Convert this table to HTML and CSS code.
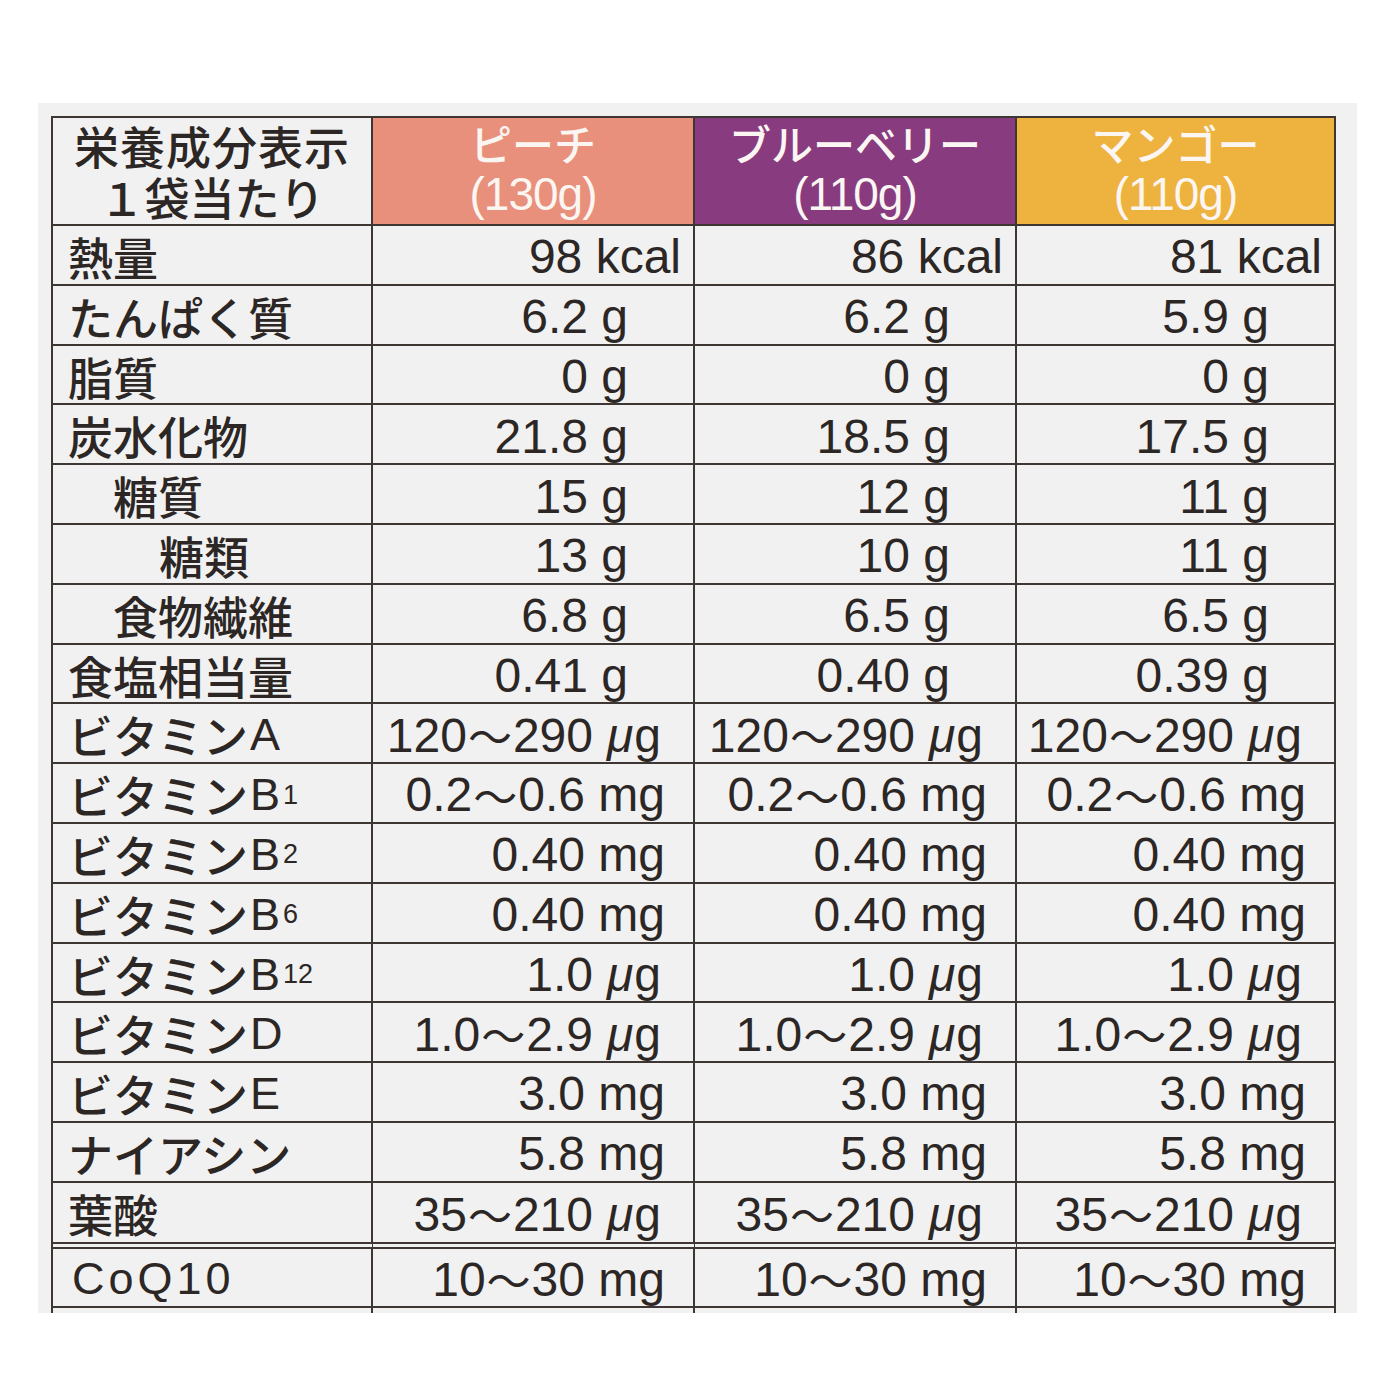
FILE: index.html
```html
<!DOCTYPE html>
<html lang="ja">
<head>
<meta charset="utf-8">
<title>栄養成分表示</title>
<link rel="stylesheet" href="styles.css">
</head>
<body>
<div class="panel">
  <div class="table">
    <div class="cell head-label"><span>栄養成分表示</span><span>１袋当たり</span></div>
    <div class="cell head peach"><span class="kana">ピーチ</span><span class="wt">(130g)</span></div>
    <div class="cell head berry"><span class="kana">ブルーベリー</span><span class="wt">(110g)</span></div>
    <div class="cell head mango"><span class="kana">マンゴー</span><span class="wt">(110g)</span></div>

    <div class="cell label">熱量</div>
    <div class="cell val kcal">98 kcal</div>
    <div class="cell val kcal">86 kcal</div>
    <div class="cell val kcal">81 kcal</div>

    <div class="cell label">たんぱく質</div>
    <div class="cell val g">6.2 g</div>
    <div class="cell val g">6.2 g</div>
    <div class="cell val g">5.9 g</div>

    <div class="cell label">脂質</div>
    <div class="cell val g">0 g</div>
    <div class="cell val g">0 g</div>
    <div class="cell val g">0 g</div>

    <div class="cell label">炭水化物</div>
    <div class="cell val g">21.8 g</div>
    <div class="cell val g">18.5 g</div>
    <div class="cell val g">17.5 g</div>

    <div class="cell label ind1">糖質</div>
    <div class="cell val g">15 g</div>
    <div class="cell val g">12 g</div>
    <div class="cell val g">11 g</div>

    <div class="cell label ind2">糖類</div>
    <div class="cell val g">13 g</div>
    <div class="cell val g">10 g</div>
    <div class="cell val g">11 g</div>

    <div class="cell label ind1">食物繊維</div>
    <div class="cell val g">6.8 g</div>
    <div class="cell val g">6.5 g</div>
    <div class="cell val g">6.5 g</div>

    <div class="cell label">食塩相当量</div>
    <div class="cell val g">0.41 g</div>
    <div class="cell val g">0.40 g</div>
    <div class="cell val g">0.39 g</div>

    <div class="cell label">ビタミン<span class="lat">A</span></div>
    <div class="cell val ug">120<span class="tl">～</span>290<i>μ</i>g</div>
    <div class="cell val ug">120<span class="tl">～</span>290<i>μ</i>g</div>
    <div class="cell val ug">120<span class="tl">～</span>290<i>μ</i>g</div>

    <div class="cell label">ビタミン<span class="lat">B</span><span class="sub">1</span></div>
    <div class="cell val mg">0.2<span class="tl">～</span>0.6 mg</div>
    <div class="cell val mg">0.2<span class="tl">～</span>0.6 mg</div>
    <div class="cell val mg">0.2<span class="tl">～</span>0.6 mg</div>

    <div class="cell label">ビタミン<span class="lat">B</span><span class="sub">2</span></div>
    <div class="cell val mg">0.40 mg</div>
    <div class="cell val mg">0.40 mg</div>
    <div class="cell val mg">0.40 mg</div>

    <div class="cell label">ビタミン<span class="lat">B</span><span class="sub">6</span></div>
    <div class="cell val mg">0.40 mg</div>
    <div class="cell val mg">0.40 mg</div>
    <div class="cell val mg">0.40 mg</div>

    <div class="cell label">ビタミン<span class="lat">B</span><span class="sub">12</span></div>
    <div class="cell val ug">1.0<i>μ</i>g</div>
    <div class="cell val ug">1.0<i>μ</i>g</div>
    <div class="cell val ug">1.0<i>μ</i>g</div>

    <div class="cell label">ビタミン<span class="lat">D</span></div>
    <div class="cell val ug">1.0<span class="tl">～</span>2.9<i>μ</i>g</div>
    <div class="cell val ug">1.0<span class="tl">～</span>2.9<i>μ</i>g</div>
    <div class="cell val ug">1.0<span class="tl">～</span>2.9<i>μ</i>g</div>

    <div class="cell label">ビタミン<span class="lat">E</span></div>
    <div class="cell val mg">3.0 mg</div>
    <div class="cell val mg">3.0 mg</div>
    <div class="cell val mg">3.0 mg</div>

    <div class="cell label">ナイアシン</div>
    <div class="cell val mg">5.8 mg</div>
    <div class="cell val mg">5.8 mg</div>
    <div class="cell val mg">5.8 mg</div>

    <div class="cell label dbl">葉酸</div>
    <div class="cell val ug dbl">35<span class="tl">～</span>210<i>μ</i>g</div>
    <div class="cell val ug dbl">35<span class="tl">～</span>210<i>μ</i>g</div>
    <div class="cell val ug dbl">35<span class="tl">～</span>210<i>μ</i>g</div>

    <div class="cell label"><span class="lat coq">CoQ10</span></div>
    <div class="cell val mg">10<span class="tl">～</span>30 mg</div>
    <div class="cell val mg">10<span class="tl">～</span>30 mg</div>
    <div class="cell val mg">10<span class="tl">～</span>30 mg</div>

    <div class="cell label"></div>
    <div class="cell val"></div>
    <div class="cell val"></div>
    <div class="cell val"></div>
  </div>
</div>
</body>
</html>
```

FILE: styles.css
```css
html, body {
  margin: 0;
  padding: 0;
  background: #ffffff;
}

body {
  font-family: "Noto Sans CJK JP", "Noto Sans", sans-serif;
  color: #2c2725;
}

.panel {
  margin: 103px 0 0 38px;
  width: 1319px;
  height: 1210px;
  background: #f1f1f1;
  padding: 13px 0 0 13px;
  box-sizing: border-box;
  overflow: hidden;
}

.table {
  display: grid;
  grid-template-columns: 320px 322px 322px 319px;
  grid-template-rows: 108px repeat(16, 59.8px) 66px 59px 60px;
  width: max-content;
  border-top: 2px solid #3d3633;
  border-left: 2px solid #3d3633;
}

.cell {
  box-sizing: border-box;
  border-right: 2px solid #3d3633;
  border-bottom: 2px solid #3d3633;
  display: flex;
  align-items: center;
  line-height: 1.15;
  white-space: nowrap;
}

.cell.dbl {
  border-bottom: 7px double #3d3633;
}

.head-label,
.head {
  flex-direction: column;
  justify-content: center;
}

.head-label {
  font-size: 45px;
  font-weight: 500;
  letter-spacing: 1px;
  line-height: 1.13;
  padding-top: 2px;
}

.head-label span:last-child {
  letter-spacing: 0;
}

.head {
  color: #fbf6f2;
  line-height: 1.15;
  padding-bottom: 2px;
}

.head .kana {
  font-size: 42px;
  font-weight: 500;
}

.head .wt {
  font-family: "Liberation Sans", "Noto Sans CJK JP", sans-serif;
  font-size: 46px;
  letter-spacing: -1px;
}

.peach { background: #e8907b; }
.berry { background: #893b7f; }
.mango { background: #eeb23f; }

.label {
  font-size: 45px;
  font-weight: 500;
  padding-left: 15px;
  padding-top: 4px;
}

.label.ind1 { padding-left: 60px; }
.label.ind2 { padding-left: 106px; }

.lat {
  font-family: "Liberation Sans", "Noto Sans CJK JP", sans-serif;
  font-weight: 400;
  font-size: 45px;
  margin-left: 2px;
}

.lat.coq {
  letter-spacing: 4px;
  margin-left: 4px;
}

.sub {
  font-family: "Liberation Sans", "Noto Sans CJK JP", sans-serif;
  font-weight: 400;
  font-size: 27px;
  margin-left: 3px;
}

.val {
  justify-content: flex-end;
  font-family: "Liberation Sans", "Noto Sans CJK JP", sans-serif;
  font-size: 48px;
  font-weight: 400;
  padding-top: 4px;
}

.val .tl {
  font-family: "Noto Sans CJK JP", sans-serif;
  font-size: 44px;
  margin: 0 1px;
}

.val i {
  font-style: italic;
  margin-left: 14px;
  margin-right: 1px;
}

.kcal { padding-right: 12px; }
.g { padding-right: 65px; }
.mg { padding-right: 28px; }
.ug { padding-right: 32px; }
```
